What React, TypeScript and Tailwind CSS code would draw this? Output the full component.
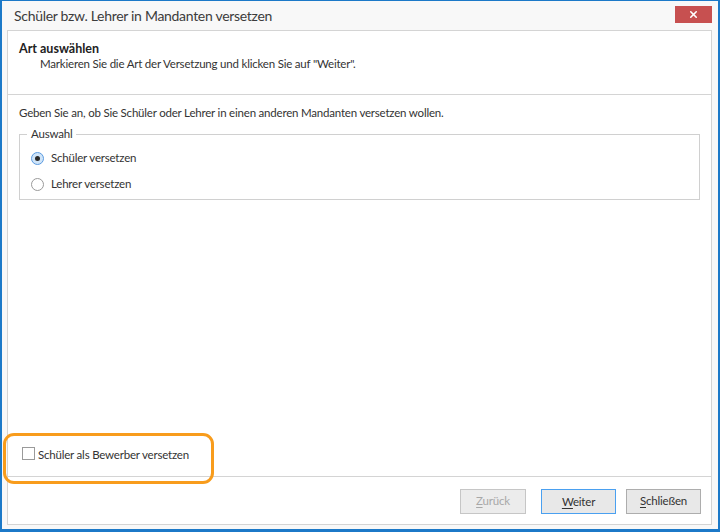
import { X } from 'lucide-react'

const font = { fontFamily: '"Segoe UI", Lato, sans-serif' }

function Radio({ checked, label }: { checked?: boolean; label: string }) {
  return (
    <div className="flex items-center h-[26px]">
      <span
        className={
          checked
            ? 'w-[13px] h-[13px] rounded-full border border-[#5b9be0] bg-[#cfe4f8] flex items-center justify-center'
            : 'w-[13px] h-[13px] rounded-full border border-[#9a9a9a] bg-white'
        }
      >
        {checked && <span className="w-[5px] h-[5px] rounded-full bg-[#2a2a2a]" />}
      </span>
      <span className="ml-[7px] text-[11.5px] text-[#333]">{label}</span>
    </div>
  )
}

function Btn({ label, u, primary, disabled }: { label: string; u: string; primary?: boolean; disabled?: boolean }) {
  const rest = label.slice(1)
  return (
    <button
      type="button"
      disabled={disabled}
      className={
        disabled
          ? 'h-[25px] w-[66px] border border-[#c6c6c6] bg-[#ececec] text-[11.5px] text-[#a8a8a8]'
          : primary
            ? 'h-[25px] w-[75px] border border-[#4aa0f0] bg-[#e8e8e8] text-[11.5px] text-[#333]'
            : 'h-[25px] w-[75px] border border-[#adadad] bg-[#e8e8e8] text-[11.5px] text-[#333]'
      }
    >
      <span className="underline underline-offset-2">{u}</span>
      {rest}
    </button>
  )
}

export default function App() {
  return (
    <div
      style={font}
      className="relative w-[720px] h-[532px] bg-[#f8f8f8] border-t border-x-2 border-b-[3px] border-[#1c79c8] flex flex-col tracking-[-0.2px]"
    >
      {/* title bar */}
      <div className="h-[29px] flex items-center justify-between pl-[12px] pr-[6px]">
        <span className="text-[14px] text-[#3c3c3c] tracking-[-0.3px]">Schüler bzw. Lehrer in Mandanten versetzen</span>
        <div className="w-[37px] h-[17px] bg-[#c75050] flex items-center justify-center mb-[2px]">
          <X className="text-white size-[11px]" strokeWidth={3.5} />
        </div>
      </div>

      {/* wizard panel */}
      <div className="ml-[5px] mr-[6px] h-[495px] border border-[#d4d4d4] bg-white flex flex-col">
        <div className="h-[64px] border-b border-[#d4d4d4] pl-[11px] pt-[10px]">
          <div className="text-[12.5px] font-bold text-[#222] leading-[15px] tracking-normal">Art auswählen</div>
          <div className="text-[11.5px] text-[#333] leading-[15px] pl-[21px]">
            Markieren Sie die Art der Versetzung und klicken Sie auf "Weiter".
          </div>
        </div>

        <div className="flex-1 border-b border-[#d4d4d4] px-[11px] pt-[10px] flex flex-col">
          <div className="text-[11.5px] text-[#333] leading-[16px]">
            Geben Sie an, ob Sie Schüler oder Lehrer in einen anderen Mandanten versetzen wollen.
          </div>
          <fieldset className="mt-[5px] border border-[#d0d0d0] pl-[7px] pt-[3px] pb-[2px]">
            <legend className="px-[4px] text-[11.5px] text-[#333] leading-[16px]">Auswahl</legend>
            <div className="pl-[4px]">
              <Radio checked label="Schüler versetzen" />
              <Radio label="Lehrer versetzen" />
            </div>
          </fieldset>
          <div className="flex-1" />
          <div className="flex items-center mb-[13px] ml-[3px]">
            <span className="w-[13px] h-[13px] border border-[#9a9a9a] bg-white" />
            <span className="ml-[3px] mt-[2px] text-[11.5px] text-[#333]">Schüler als Bewerber versetzen</span>
          </div>
        </div>

        <div className="h-[47px] flex items-center justify-end pr-[10px] pt-[1px]">
          <Btn label="Zurück" u="Z" disabled />
          <div className="ml-[15px] mr-[10px]">
            <Btn label="Weiter" u="W" primary />
          </div>
          <Btn label="Schließen" u="S" />
        </div>
      </div>

      {/* annotation */}
      <div className="absolute left-[1px] top-[432px] w-[211px] h-[51px] rounded-[11px] border-[3px] border-[#f89c1c] pointer-events-none" />
    </div>
  )
}
